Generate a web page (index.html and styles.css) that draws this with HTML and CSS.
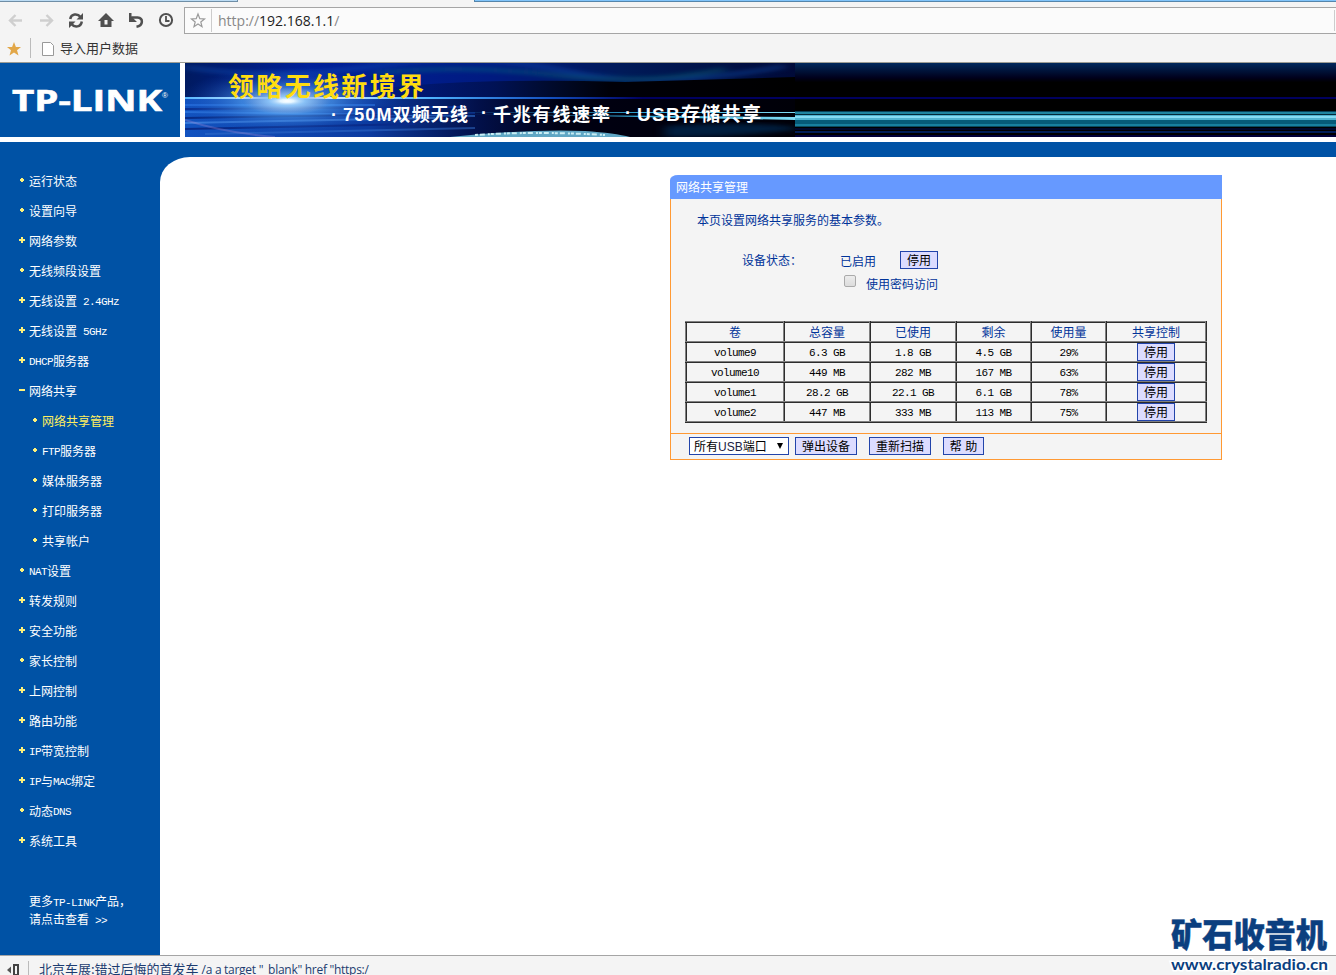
FILE: index.html
```html
<!DOCTYPE html>
<html lang="zh-CN">
<head>
	<meta charset="utf-8">
	<title>TP-LINK</title>
	<link rel="stylesheet" href="styles.css">
</head>
<body>
	<div class="browser">
		<div class="tabs"><i class="tab-a"></i><i class="tab-b"></i></div>
		<div class="toolbar">
			<div class="nav">
				<svg width="184" height="27" viewBox="0 0 184 27">
					<g fill="none" stroke="#cfcfcf" stroke-width="2.4">
						<path d="M10 13.5H22M15.5 8L10 13.5L15.5 19"/>
						<path d="M40 13.5H52M46.500 8L52 13.500L46.500 19"/>
					</g>
					<g fill="none" stroke="#505050" stroke-width="2.5">
						<path d="M70.200 12C71 6.800 77.500 6 80.500 10M81.800 14.500C81 20.200 74.500 21 71.500 17"/>
						<path d="M132 10.500H137.500C143.500 11 143.500 18.500 136.500 19.800"/>
						<circle cx="166" cy="13" r="6.100" stroke-width="2"/>
						<path d="M166 9V14H169.500" stroke-width="1.800"/>
					</g>
					<g fill="#505050">
						<path d="M83 6V12.500H76.500ZM69 21V14.500H75.500Z"/>
						<path d="M106 6L114 14H111.500V20H100.500V14H98Z"/>
						<path d="M129 6V15H137L133.500 11.500L131.500 9V6Z"/>
					</g>
					<rect x="104.500" y="13" width="3" height="4.500" fill="#f4f4f4"/>
				</svg>
			</div>
			<div class="address">
				<svg class="fav" width="26" height="25" viewBox="0 0 26 25">
					<path d="M13 6L14.800 10.700L19.500 11L15.800 14L17 18.700L13 16L9 18.700L10.200 14L6.500 11L11.200 10.700Z" fill="none" stroke="#9a9a9a" stroke-width="1.200"/>
				</svg>
				<span class="url">http://<b>192.168.1.1</b>/</span>
				<i class="end"></i>
			</div>
		</div>
		<div class="bookmarks">
			<svg width="30" height="28" viewBox="0 0 30 28">
				<path d="M14 8L15.900 13H21L17 16.200L18.500 21.500L14 18.400L9.500 21.500L11 16.200L7 13H12.100Z" fill="#e2a748"/>
			</svg>
			<i class="sep"></i>
			<svg class="page" width="12" height="14" viewBox="0 0 12 14">
				<path d="M.5.5H8.500L11.500 3.500V13.500H.5Z" fill="#fff" stroke="#999"/>
			</svg>
			<span class="bm">导入用户数据</span>
		</div>
	</div>
	<div class="top">
		<div class="logo">
			<svg width="180" height="74" viewBox="0 0 180 74">
				<text x="12" y="47.500" class="brand" textLength="150" lengthAdjust="spacingAndGlyphs">TP-LINK</text>
				<text x="162" y="35" class="reg">®</text>
			</svg>
		</div>
		<div class="banner">
			<svg width="1151" height="74" viewBox="0 0 1151 74">
				<defs>
					<linearGradient id="sky" x1="0" x2="1" y1="0" y2="0">
						<stop offset="0" stop-color="#001a60"/>
						<stop offset=".2" stop-color="#00209a"/>
						<stop offset=".5" stop-color="#001a80"/>
						<stop offset=".72" stop-color="#001a58"/>
						<stop offset="1" stop-color="#000a38"/>
					</linearGradient>
					<linearGradient id="dark" x1="0" x2="1" y1="0" y2="0">
						<stop offset="0" stop-color="#000820" stop-opacity="0"/>
						<stop offset=".35" stop-color="#000515" stop-opacity=".4"/>
						<stop offset=".6" stop-color="#000008"/>
						<stop offset="1" stop-color="#000"/>
					</linearGradient>
					<linearGradient id="sea" x1="0" x2="1" y1="0" y2="0">
						<stop offset="0" stop-color="#1253c0"/>
						<stop offset=".3" stop-color="#0c3ba0"/>
						<stop offset=".48" stop-color="#02104a"/>
						<stop offset=".62" stop-color="#000012"/>
						<stop offset="1" stop-color="#000008"/>
					</linearGradient>
					<linearGradient id="line" x1="0" x2="610" y1="0" y2="0" gradientUnits="userSpaceOnUse">
						<stop offset="0" stop-color="#58b8ff"/>
						<stop offset=".18" stop-color="#fff"/>
						<stop offset=".4" stop-color="#4fb4ff"/>
						<stop offset=".6" stop-color="#1450c0"/>
						<stop offset=".75" stop-color="#000060"/>
					</linearGradient>
					<linearGradient id="beam" x1="0" x2="1" y1="0" y2="0">
						<stop offset="0" stop-color="#2aa5dc" stop-opacity="0"/>
						<stop offset=".6" stop-color="#35b0e0"/>
						<stop offset="1" stop-color="#80dcf4"/>
					</linearGradient>
					<radialGradient id="sun">
						<stop offset="0" stop-color="#fff"/>
						<stop offset=".15" stop-color="#e4f5ff" stop-opacity=".95"/>
						<stop offset=".4" stop-color="#5aa8f4" stop-opacity=".6"/>
						<stop offset="1" stop-color="#0a40b0" stop-opacity="0"/>
					</radialGradient>
					<linearGradient id="stripe" x1="0" x2="0" y1="0" y2="74" gradientUnits="userSpaceOnUse">
						<stop offset="0" stop-color="#00285c"/>
						<stop offset=".11" stop-color="#001238"/>
						<stop offset=".2" stop-color="#00001c"/>
						<stop offset=".26" stop-color="#000"/>
						<stop offset="1" stop-color="#000"/>
					</linearGradient>
					<filter id="soft"><feGaussianBlur stdDeviation="6 2"/></filter>
				</defs>
				<rect width="610" height="36" fill="url(#sky)"/>
				<g fill="none" stroke-width="4" opacity=".45" filter="url(#soft)">
					<path d="M0 4Q90 18 190 3T380 8T600 3" stroke="#1456b8"/>
					<path d="M190 10Q280 1 370 12T540 6" stroke="#087080"/>
				</g>
				<path d="M210 24Q300 15 440 19L610 14V36H150Z" fill="url(#dark)"/>
				<rect y="36" width="610" height="38" fill="url(#sea)"/>
				<g fill="none" stroke-width="2">
					<path d="M0 42H190" stroke="#2d78e8" opacity=".6"/>
					<path d="M0 46L280 44" stroke="#0a2f90"/>
					<path d="M0 49L290 53" stroke="#3c8af0" opacity=".5"/>
					<path d="M0 55L290 50" stroke="#082880" opacity=".9"/>
					<path d="M0 60L250 55" stroke="#5aa0f4" opacity=".5"/>
					<path d="M0 66L230 61" stroke="#092a88"/>
					<path d="M20 71L290 65" stroke="#3370cc" opacity=".5"/>
					<path d="M0 57Q40 70 90 74" stroke="#b090d8" opacity=".3"/>
				</g>
				<ellipse cx="102" cy="38" rx="110" ry="34" fill="url(#sun)"/>
				<rect y="34" width="610" height="2" fill="url(#line)"/>
				<ellipse cx="102" cy="38" rx="46" ry="12" fill="url(#sun)"/>
				<path d="M265 74Q340 66 400 68Q430 70 445 74Z" fill="#5fa6c4"/>
				<path d="M290 72Q350 68 420 72" fill="none" stroke="#c8edf4" stroke-width="2" stroke-dasharray="3 2 5 3 2 1"/>
				<rect x="260" y="49" width="350" height="1" fill="url(#beam)"/>
				<path d="M260 51L610 54V57L400 53Z" fill="url(#beam)"/>
				<path d="M480 63Q560 58 610 64V67Q550 74 480 74Z" fill="#033260" opacity=".6" filter="url(#soft)"/>
				<g>
					<rect x="610" width="541" height="74" fill="url(#stripe)"/>
					<rect x="610" y="34" width="541" height="2" fill="#00005e"/>
					<rect x="610" y="48" width="541" height="1" fill="#074058"/>
					<rect x="610" y="49" width="541" height="2" fill="#2085a0"/>
					<rect x="610" y="51" width="541" height="1" fill="#022838"/>
					<rect x="610" y="52" width="541" height="5" fill="#4fb2d0"/>
					<rect x="610" y="53" width="541" height="2" fill="#86dbf2"/>
					<rect x="610" y="57" width="541" height="4" fill="#065a78"/>
					<rect x="610" y="61" width="541" height="2" fill="#177f9e"/>
					<rect x="610" y="63" width="541" height="1" fill="#0a4860"/>
					<rect x="610" y="65" width="541" height="2" fill="#00062a"/>
					<rect x="610" y="68" width="541" height="2" fill="#001d58"/>
					<rect x="610" y="72" width="541" height="2" fill="#00003a"/>
				</g>
				<text x="43" y="33" class="slogan" textLength="196">领略无线新境界</text>
				<g class="feature">
					<text x="146" y="58">·</text>
					<text x="158" y="58" textLength="125">750M双频无线</text>
					<text x="296" y="56">·</text>
					<text x="308" y="58" textLength="117">千兆有线速率</text>
					<text x="440" y="56">·</text>
					<text x="452" y="58" class="usb-text" textLength="124">USB存储共享</text>
				</g>
			</svg>
		</div>
	</div>
	<div class="bar"></div>
	<div class="main">
		<div class="side">
			<ul class="menu">
				<li class="dot">运行状态</li>
				<li class="dot">设置向导</li>
				<li class="plus">网络参数</li>
				<li class="dot">无线频段设置</li>
				<li class="plus">无线设置<span class="en"> 2.4GHz</span></li>
				<li class="plus">无线设置<span class="en"> 5GHz</span></li>
				<li class="plus"><span class="en">DHCP</span>服务器</li>
				<li class="minus">网络共享</li>
				<li class="dot sub cur">网络共享管理</li>
				<li class="dot sub"><span class="en">FTP</span>服务器</li>
				<li class="dot sub">媒体服务器</li>
				<li class="dot sub">打印服务器</li>
				<li class="dot sub">共享帐户</li>
				<li class="dot"><span class="en">NAT</span>设置</li>
				<li class="plus">转发规则</li>
				<li class="plus">安全功能</li>
				<li class="dot">家长控制</li>
				<li class="plus">上网控制</li>
				<li class="plus">路由功能</li>
				<li class="plus"><span class="en">IP</span>带宽控制</li>
				<li class="plus"><span class="en">IP</span>与<span class="en">MAC</span>绑定</li>
				<li class="dot">动态<span class="en">DNS</span></li>
				<li class="plus">系统工具</li>
			</ul>
			<p class="more">更多<span class="en">TP-LINK</span>产品，<br>请点击查看<span class="en"> &gt;&gt;</span></p>
		</div>
		<div class="content">
			<div class="panel">
				<h1>网络共享管理</h1>
				<div class="body">
					<p class="intro">本页设置网络共享服务的基本参数。</p>
					<div class="state">
						<span class="label">设备状态：</span>
						<span class="value">已启用</span>
						<button>停用</button>
					</div>
					<div class="pwd"><i class="check"></i>使用密码访问</div>
					<table>
						<colgroup><col class="c1"><col class="c2"><col class="c2"><col class="c3"><col class="c3"><col class="c4"></colgroup>
						<tr><th>卷</th><th>总容量</th><th>已使用</th><th>剩余</th><th>使用量</th><th>共享控制</th></tr>
						<tr><td>volume9</td><td>6.3 GB</td><td>1.8 GB</td><td>4.5 GB</td><td>29%</td><td class="act"><button>停用</button></td></tr>
						<tr><td>volume10</td><td>449 MB</td><td>282 MB</td><td>167 MB</td><td>63%</td><td class="act"><button>停用</button></td></tr>
						<tr><td>volume1</td><td>28.2 GB</td><td>22.1 GB</td><td>6.1 GB</td><td>78%</td><td class="act"><button>停用</button></td></tr>
						<tr><td>volume2</td><td>447 MB</td><td>333 MB</td><td>113 MB</td><td>75%</td><td class="act"><button>停用</button></td></tr>
					</table>
				</div>
				<div class="foot">
					<div class="select"><span>所有<span class="usb">USB</span>端口</span><i></i></div>
					<button class="w62">弹出设备</button>
					<button class="w62">重新扫描</button>
					<button class="w41">帮 助</button>
				</div>
			</div>
		</div>
	</div>
	<div class="status">
		<svg width="28" height="19" viewBox="0 0 28 19">
			<path d="M7 14L11 10.500V17.500Z" fill="#555"/>
			<rect x="14" y="9" width="4" height="10" fill="none" stroke="#444" stroke-width="2"/>
		</svg>
		<i class="sep"></i>
		<span class="news">北京车展:错过后悔的首发车 <span class="tail">/a a target "_blank" href "https:/</span></span>
	</div>
	<svg class="mark" width="170" height="64" viewBox="0 0 170 64">
		<text x="5" y="33" class="mark-cn" textLength="156" lengthAdjust="spacingAndGlyphs">矿石收音机</text>
		<text x="5" y="56" class="mark-en" textLength="157" lengthAdjust="spacingAndGlyphs">www.crystalradio.cn</text>
	</svg>
</body>
</html>
```
FILE: styles.css
```css
*{
	box-sizing: border-box;
}
body{
	display: flex;
	flex-direction: column;
	position: relative;
	width: 1336px;
	height: 975px;
	margin: 0;
	overflow: hidden;
	background-color: #fff;
	font: 12px/18px "Liberation Sans","Noto Sans CJK SC",sans-serif;
}
ul,p,h1{
	list-style: none;
	margin: 0;
	padding: 0;
}
svg{
	display: block;
	flex: none;
}
i{
	flex: none;
}
.en{
	font-family: "Liberation Mono",monospace;
	font-size: 11px;
	letter-spacing: -.6px;
	line-height: 1;
	white-space: pre;
}
.browser{
	height: 63px;
	background-color: #f4f4f4;
	border-bottom: 1px solid #9c9c94;
}
.tabs{
	display: flex;
	justify-content: space-between;
	height: 7px;
}
.tab-a{
	width: 238px;
	height: 2px;
	background-color: #bcdcf4;
	border-bottom: 1px solid #6f8ea6;
	border-right: 1px solid #6f8ea6;
}
.tab-b{
	width: 862px;
	height: 2px;
	background-color: #80c4fa;
	border-bottom: 1px solid #5585ab;
	border-left: 1px solid #5585ab;
}
.toolbar{
	display: flex;
	height: 27px;
}
.address{
	display: flex;
	align-items: center;
	flex: 1;
	border: 1px solid #a5a5a5;
	border-right: 0;
	background-color: #fbfbfb;
}
.address .url{
	flex: 1;
	height: 23px;
	padding-left: 6px;
	border-left: 1px solid #ccc;
	color: #888;
	font: 14px/23px "Open Sans","Noto Sans",sans-serif;
}
.url b{
	color: #222;
	font-weight: normal;
}
.address .end{
	width: 2px;
	height: 21px;
	border-left: 1px solid #ccc;
}
.bookmarks{
	display: flex;
	align-items: center;
	height: 28px;
}
.sep{
	width: 1px;
	height: 20px;
	background-color: #bbb;
}
.bookmarks .sep{
	margin-right: 11px;
}
.page{
	margin-top: 2px;
}
.bm{
	margin-left: 6px;
	color: #333;
	font: 13px/20px "Noto Sans CJK SC",sans-serif;
}
.top{
	display: flex;
	gap: 5px;
	height: 74px;
}
.logo{
	width: 180px;
	background-color: #0052a5;
}
.brand{
	fill: #fff;
	stroke: #fff;
	stroke-width: .6px;
	font: bold 28px "Open Sans","Liberation Sans",sans-serif;
}
.reg{
	fill: #fff;
	font: 8px "Liberation Sans",sans-serif;
}
.slogan{
	fill: #ffdc10;
	font: bold 26px "Noto Sans CJK SC",sans-serif;
}
.feature{
	fill: #fff;
	font: bold 18px "Liberation Sans","Noto Sans CJK SC",sans-serif;
}
.usb-text{
	font-size: 19px;
}
.bar{
	height: 15px;
	margin-top: 5px;
	background-color: #0052a5;
}
.main{
	display: flex;
	height: 798px;
	background-color: #0052a5;
}
.side{
	width: 160px;
	padding-top: 9px;
	color: #fff;
}
.menu li{
	display: flex;
	align-items: center;
	height: 30px;
	padding: 2px 0 0 19px;
	white-space: pre;
}
.menu li.sub{
	padding-left: 32px;
}
.menu .cur{
	color: #ffef60;
}
.menu li::before{
	content: "";
	width: 6px;
	height: 6px;
	margin: -4px 4px 0 0;
	background: linear-gradient(#fff27a,#fff27a) center/6px 2px no-repeat,linear-gradient(#fff27a,#fff27a) center/2px 6px no-repeat;
}
.menu .dot::before{
	background: linear-gradient(#fff27a,#fff27a) center/4px 2px no-repeat,linear-gradient(#fff27a,#fff27a) center/2px 4px no-repeat;
}
.menu .minus::before{
	background: linear-gradient(#fff27a,#fff27a) center/6px 2px no-repeat;
}
.more{
	padding: 37px 0 0 29px;
	white-space: nowrap;
}
.content{
	flex: 1;
	padding: 18px 0 0 510px;
	background-color: #fff;
	border-top-left-radius: 30px 25px;
}
.panel{
	width: 552px;
	color: #039;
}
.panel h1{
	height: 24px;
	padding: 1px 0 0 6px;
	background-color: #69f;
	border-top-left-radius: 8px 5px;
	color: #fff;
	font-size: 12px;
	font-weight: normal;
	line-height: 24px;
}
.body{
	height: 234px;
	padding: 13px 0 0 14px;
	background-color: #f4f4f4;
	border: solid #f93;
	border-width: 0 1px;
}
.intro{
	padding-left: 12px;
}
.state{
	display: flex;
	align-items: center;
	height: 20px;
	margin-top: 20px;
	padding-left: 57px;
}
.label{
	width: 98px;
	padding-top: 2px;
}
.value{
	width: 60px;
	padding-top: 4px;
}
button{
	display: block;
	width: 38px;
	height: 18px;
	padding: 2px 0 0;
	background-color: #dcdcff;
	border: 1px solid #24a;
	border-radius: 0;
	color: #000;
	font: 12px/14px "Liberation Sans","Noto Sans CJK SC",sans-serif;
}
.pwd{
	display: flex;
	align-items: center;
	height: 24px;
	margin: 2px 0 25px;
	padding: 2px 0 0 159px;
}
.check{
	width: 12px;
	height: 12px;
	margin: -8px 10px 0 0;
	background: linear-gradient(#ececec,#dcdcdc);
	border: 1px solid #aaa;
	border-radius: 2px;
}
table{
	width: 522px;
	table-layout: fixed;
	border-collapse: collapse;
	border: 2px ridge gray;
	text-align: center;
}
.c1{
	width: 98px;
}
.c2{
	width: 86px;
}
.c3{
	width: 75px;
}
.c4{
	width: 100px;
}
tr{
	height: 20px;
}
th,td{
	height: 20px;
	padding: 2px 0 0;
	border: 2px ridge gray;
	font-weight: normal;
	line-height: 16px;
}
td{
	color: #000;
	font-family: "Liberation Mono",monospace;
	font-size: 11px;
	letter-spacing: -.6px;
}
.act{
	padding: 0;
}
.act button{
	margin: 0 auto;
}
.foot{
	display: flex;
	height: 27px;
	padding: 3px 0 0 18px;
	background-color: #f4f4f4;
	border: 1px solid #f93;
}
.select{
	display: flex;
	align-items: center;
	justify-content: space-between;
	width: 100px;
	height: 18px;
	margin-right: 6px;
	padding: 0 5px 0 4px;
	background-color: #fff;
	border: 1px solid #24a;
	color: #000;
	line-height: 16px;
}
.select span{
	padding-top: 1px;
}
.usb{
	color: #224;
}
.select i{
	border: solid transparent;
	border-width: 6px 3.5px 0;
	border-top-color: #000;
}
.w62{
	width: 62px;
	margin-right: 12px;
}
.w41{
	width: 41px;
}
.status{
	display: flex;
	height: 20px;
	overflow: hidden;
	background-color: #f4f4f4;
	border-top: 1px solid #a5a5a5;
}
.status .sep{
	margin: 5px 10px 0 0;
}
.news{
	padding-top: 3px;
	color: #1c3c70;
	font: 13px/20px "Noto Sans CJK SC",sans-serif;
	white-space: nowrap;
}
.tail{
	font: 12px/18px "Open Sans",sans-serif;
	letter-spacing: -.28px;
}
.mark{
	position: absolute;
	right: 0;
	bottom: -3px;
	overflow: visible;
}
.mark-cn{
	fill: #0b3f7f;
	stroke: #0b3f7f;
	stroke-width: .5px;
	font: 900 33px "Noto Sans CJK SC",sans-serif;
}
.mark-en{
	fill: #0b3f7f;
	stroke: #fff;
	stroke-width: 3px;
	paint-order: stroke;
	font: bold 15px Lato,sans-serif;
}
```
